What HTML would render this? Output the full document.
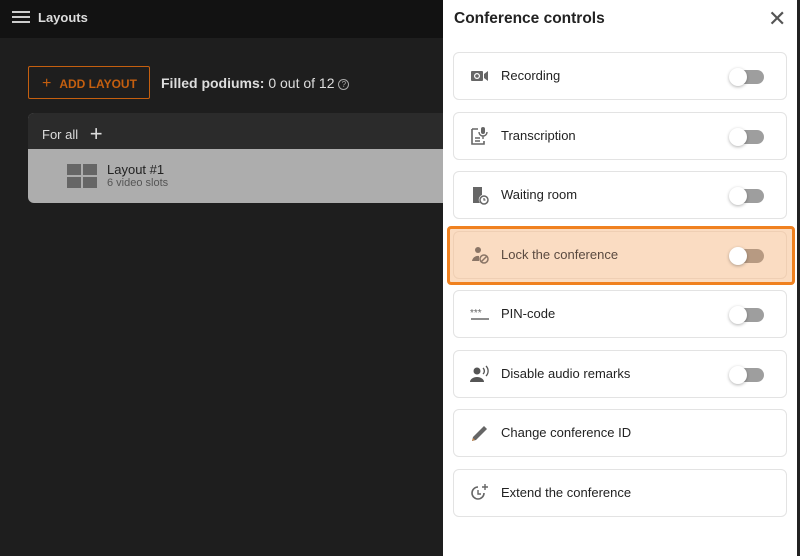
<!DOCTYPE html>
<html><head><style>
*{margin:0;padding:0;box-sizing:border-box}
body{width:800px;height:556px;background:#1e1e1e;font-family:"Liberation Sans",sans-serif;position:relative;overflow:hidden}
.hdr{position:absolute;left:0;top:0;width:800px;height:38px;background:#121212}
.abs{position:absolute}
.panel{position:absolute;left:443px;top:0;width:357px;height:556px;background:#fff;border-right:3px solid #222}
.card{position:absolute;left:10px;width:334px;height:48px;border:1px solid #e3e3e3;border-radius:6px;background:#fff}
.card .t{position:absolute;left:47px;top:15px;font-size:13px;color:#222}
.card .ic{position:absolute;left:16px;top:13px;width:20px;height:20px}
.tg{position:absolute;left:278px;top:17px;width:32px;height:14px;border-radius:7px;background:#9e9e9e}
.tg:before{content:"";position:absolute;left:-3px;top:-2px;width:18px;height:18px;border-radius:50%;background:#fff;box-shadow:0 1px 3px rgba(0,0,0,.3)}
</style></head><body>
<div class="hdr">
<div class="abs" style="left:12px;top:11px;width:18px;height:2px;background:#ccc;box-shadow:0 5px 0 #ccc,0 10px 0 #ccc"></div>
<div class="abs" style="left:38px;top:10px;font-size:13px;font-weight:bold;color:#ddd">Layouts</div>
</div>
<div class="abs" style="left:28px;top:66px;width:122px;height:33px;border:1px solid #c55f0f;border-radius:2px;color:#c55f0f;font-size:12px;font-weight:bold;padding:8px 0 0 13px"><span style="font-size:16px;font-weight:normal;margin-right:8px">+</span>ADD LAYOUT</div>
<div class="abs" style="left:161px;top:75px;font-size:14px;color:#ddd"><b>Filled podiums:</b> 0 out of 12 <span style="display:inline-block;width:11px;height:11px;border:1px solid #aaa;border-radius:50%;font-size:8px;text-align:center;line-height:10px;color:#aaa;vertical-align:1px">?</span></div>
<div class="abs" style="left:28px;top:113px;width:430px;height:90px;border-radius:6px;overflow:hidden;background:#adadad">
<div style="height:36px;background:#2b2b2b;color:#ddd;font-size:13px;padding:8px 0 0 14px">For all <span style="font-size:22px;margin-left:8px;vertical-align:-2px;font-weight:300">+</span></div>
<div class="abs" style="left:39px;top:51px;width:30px;height:24px;background:
linear-gradient(#adadad,#adadad) 14px 0/2px 24px no-repeat,linear-gradient(#adadad,#adadad) 0 11px/30px 2px no-repeat,#666"></div>
<div class="abs" style="left:79px;top:49px;font-size:13px;color:#222">Layout #1</div>
<div class="abs" style="left:79px;top:64px;font-size:11px;color:#555">6 video slots</div>
</div>
<div class="panel">
<div class="abs" style="left:11px;top:10px;font-size:15.5px;font-weight:bold;color:#222">Conference controls</div>
<div class="abs" style="left:325px;top:6px;font-size:22px;color:#555">✕</div>
<div class="card" style="top:52px"><svg class="ic" viewBox="0 0 20 20"><rect x="1" y="5" width="12" height="10" rx="1" fill="#666"/><circle cx="7" cy="10" r="3" fill="#fff"/><circle cx="7" cy="10" r="1.8" fill="#666"/><path d="M14 8l4-3v10l-4-3z" fill="#666"/></svg><div class="t">Recording</div><div class="tg"></div></div>
<div class="card" style="top:112px"><svg class="ic" viewBox="0 0 20 20"><path d="M2 3h6M2 3v15h12v-3" stroke="#666" stroke-width="1.6" fill="none"/><rect x="11" y="1" width="4" height="7" rx="2" fill="#666"/><path d="M9 6a4 4 0 008 0M13 10v3" stroke="#666" stroke-width="1.4" fill="none"/><path d="M5 12h5M5 15h5" stroke="#666" stroke-width="1.4"/></svg><div class="t">Transcription</div><div class="tg"></div></div>
<div class="card" style="top:171px"><svg class="ic" viewBox="0 0 20 20"><path d="M3 2h9v8a5 5 0 00-2 8H3z" fill="#666"/><circle cx="14" cy="15" r="4" fill="none" stroke="#666" stroke-width="1.5"/><path d="M14 13v2h1.5" stroke="#666" stroke-width="1.2" fill="none"/></svg><div class="t">Waiting room</div><div class="tg"></div></div>
<div class="abs" style="left:4px;top:226px;width:348px;height:59px;border:3px solid #f0811f;border-radius:4px;background:#fadcc2"></div>
<div class="card" style="top:231px;background:#fadcc2;border-color:#efcfb4"><svg class="ic" viewBox="0 0 20 20"><circle cx="8" cy="5" r="3" fill="#8a7566"/><path d="M2 16a6 6 0 017-5v5z" fill="#8a7566"/><circle cx="14" cy="14" r="4" fill="none" stroke="#8a7566" stroke-width="1.5"/><path d="M11.5 16.5l5-5" stroke="#8a7566" stroke-width="1.5"/></svg><div class="t" style="color:#5a4a40">Lock the conference</div><div class="tg" style="background:#b79a82"></div></div>
<div class="card" style="top:290px"><svg class="ic" viewBox="0 0 20 20"><text x="0" y="12" font-size="10" fill="#666" font-family="Liberation Sans">***</text><path d="M1 15h18" stroke="#666" stroke-width="1.5"/></svg><div class="t">PIN-code</div><div class="tg"></div></div>
<div class="card" style="top:350px"><svg class="ic" viewBox="0 0 20 20"><circle cx="7" cy="7" r="3.5" fill="#555"/><path d="M0 18a7 5 0 0114 0z" fill="#555"/><path d="M13 4a4 4 0 010 6M16 2a7 7 0 010 10" stroke="#555" stroke-width="1.3" fill="none"/></svg><div class="t">Disable audio remarks</div><div class="tg"></div></div>
<div class="card" style="top:409px"><svg class="ic" viewBox="0 0 20 20"><path d="M2 18l1-4L14 3l3 3L6 17z" fill="#666"/><path d="M2 18l1-3 2 2z" fill="#c8874a"/></svg><div class="t">Change conference ID</div></div>
<div class="card" style="top:469px"><svg class="ic" viewBox="0 0 20 20"><path d="M14 10a6 6 0 11-6-6" stroke="#666" stroke-width="1.6" fill="none"/><path d="M8 7v4h3" stroke="#666" stroke-width="1.4" fill="none"/><path d="M15 1v6M12 4h6" stroke="#666" stroke-width="1.4"/></svg><div class="t">Extend the conference</div></div>
</div>
</body></html>
